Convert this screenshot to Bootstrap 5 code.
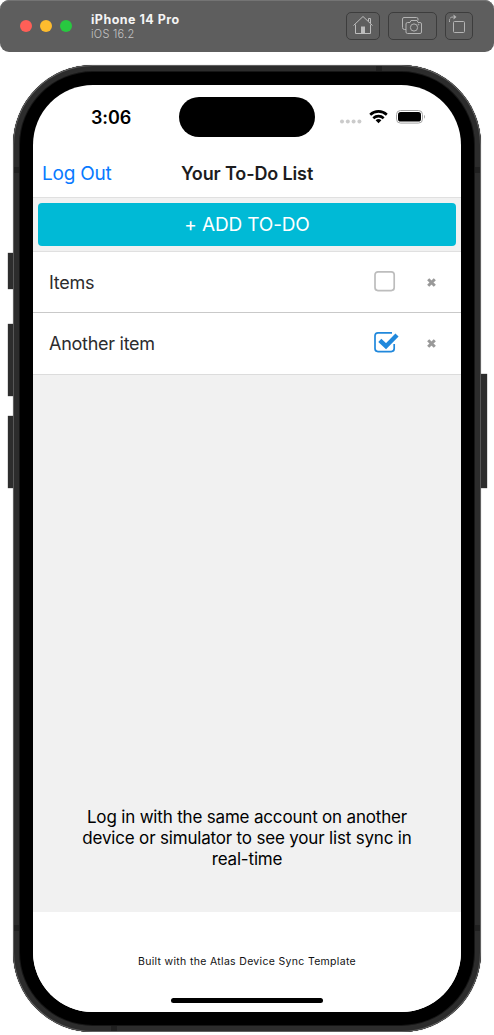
<!DOCTYPE html>
<html lang="en">
<head>
<meta charset="utf-8">
<meta name="viewport" content="width=device-width, initial-scale=1">
<title>Your To-Do List</title>
<link href="https://cdn.jsdelivr.net/npm/bootstrap@5.3.0/dist/css/bootstrap.min.css" rel="stylesheet">
<style>
body{font-family:Inter,"Liberation Sans",sans-serif;background:#fff;overflow:hidden;color:#000}
span,h1,p{white-space:nowrap}
.sim-bar{height:52px;background:#5e5e5e;border-radius:9px;box-shadow:inset 0 1px #747474;padding:0 21px 0 20px}
.dot{width:12px;height:12px;border-radius:50%}
.dot-close{background:#ff5f57}
.dot-min{background:#febc2e}
.dot-max{background:#28c840}
.sim-text{margin-left:19px}
.sim-name{font-size:12.5px;line-height:15px;font-weight:700;color:#f4f4f4;letter-spacing:.48px}
.sim-os{font-size:11px;line-height:14px;font-weight:300;color:#c4c4c4;letter-spacing:.25px}
.tool{height:28px;border:1px solid #3d3d3d;border-radius:5px}
.tool svg{display:block}
.tool-home{width:34px}
.tool-shot{width:49px}
.tool-turn{width:28px}
.phone{width:468px;height:967px;margin:13px 0 0 13px;border-radius:80px;background:#000;padding:20px;box-shadow:inset 0 0 0 1px #606060,inset 0 0 0 6px #2c2c2c,inset 0 0 0 7px #161616,0 0 1px #777}
.side{width:5.5px;background:#2d2d2d;box-shadow:0 0 1px #333}
.band{background:#202020}
.screen{height:927px;border-radius:60px;background:#fff;overflow:hidden}
.status{height:62px}
.clock{font-size:18px;line-height:20px;font-weight:600;left:58px;top:23px;letter-spacing:-.1px}
.island{width:136px;height:40px;border-radius:20px;background:#000;left:146px;top:12px}
.icons{left:306px;top:22px}
.topnav{height:51px;padding:15px 0 0 9px;border-bottom:1px solid #e0e0e0}
.logout{font-size:19px;line-height:24px;color:#087aff;letter-spacing:-.25px}
.heading{font-size:18px;line-height:24px;font-weight:600;color:#1c1c1e;letter-spacing:-.13px;top:15px}
.main-area{background:#f1f1f1}
.add-wrap{padding:5px;height:53px}
.btn-add{height:43px;background:#00bad6;color:#fff;border:0;border-radius:4px;font-size:19px;font-weight:400;line-height:43px;padding:0;letter-spacing:-.15px}
.todo{height:60px;background:#fff;padding:0 23px 0 16px;font-size:18px;color:#2c2c2e;letter-spacing:-.27px}
.todos{border-top:1px solid #e0e0e0;border-bottom:1px solid #dcdcdc}
.todo+.todo{height:62px;padding-bottom:1px;border-top:1px solid #c9c9c9}
.hint{font-size:17px;line-height:21px;margin-bottom:42px;letter-spacing:-.18px}
.foot{height:100px;background:#fff}
.built{font-size:10.5px;line-height:14px;letter-spacing:.32px;margin-top:43px;color:#111}
.home{width:152px;height:5px;border-radius:3px;background:#000;margin-top:29px}
</style>
</head>
<body>
<header class="sim-bar d-flex align-items-center">
  <div class="d-flex gap-2">
    <i class="dot dot-close"></i><i class="dot dot-min"></i><i class="dot dot-max"></i>
  </div>
  <div class="sim-text d-flex flex-column">
    <span class="sim-name">iPhone 14 Pro</span><span class="sim-os">iOS 16.2</span>
  </div>
  <div class="d-flex gap-2 ms-auto">
    <div class="tool tool-home"><svg width="32" height="26" fill="none" stroke="#bcbcbc"><path d="M6.500 12.500 16 3.500l9.500 9M8.500 11.500v9h15v-9M21.500 8V5.500h2V10"/><path d="M14 20v-6.500h4V20z" fill="#bcbcbc" stroke="none"/></svg></div>
    <div class="tool tool-shot"><svg width="47" height="26" fill="none" stroke="#b4b4b4"><path d="M17 16.500h-1.500q-2 0-2-2V6q0-1.500 1.500-1.500h12.500q1.500 0 1.500 1.500v1.500M18.500 9.500H21l1-2h6l1 2h2q1.500 0 1.500 1.500v8q0 1.500-1.500 1.500H18.500q-1.500 0-1.500-1.500v-8q0-1.500 1.500-1.500z"/><circle cx="25" cy="14.500" r="3.600"/><circle cx="29.500" cy="11.500" r=".4"/></svg></div>
    <div class="tool tool-turn"><svg width="26" height="26" fill="none" stroke="#b4b4b4"><rect x="7.500" y="8.500" width="11" height="11" rx="1"/><path d="M3.500 9V7.500q0-3.500 3.500-3.500h1.500" stroke-dasharray="3 1"/><path d="M7.500 1.500l3 2.500-3 2.500z" fill="#b4b4b4" stroke="none"/></svg></div>
  </div>
</header>

<div class="phone position-relative">
  <i class="side position-absolute" style="left:-5.5px;top:188px;height:36px"></i>
  <i class="side position-absolute" style="left:-5.5px;top:259px;height:72px"></i>
  <i class="side position-absolute" style="left:-5.5px;top:351px;height:72px"></i>
  <i class="side position-absolute" style="right:-5.5px;top:308.500px;height:114.500px"></i>
  <i class="band position-absolute" style="left:1px;top:102px;width:5px;height:6px"></i>
  <i class="band position-absolute" style="right:1px;top:102px;width:5px;height:6px"></i>
  <i class="band position-absolute" style="left:1px;top:860px;width:5px;height:6px"></i>
  <i class="band position-absolute" style="right:1px;top:860px;width:5px;height:6px"></i>
  <i class="band position-absolute" style="left:363px;top:1px;width:6px;height:5px"></i>
  <i class="band position-absolute" style="left:98px;bottom:1px;width:6px;height:5px"></i>

  <div class="screen d-flex flex-column">
    <div class="status position-relative">
      <span class="clock position-absolute">3:06</span>
      <div class="island position-absolute"></div>
      <svg class="icons position-absolute" width="90" height="22">
        <g fill="#cbcbcb"><circle cx="3" cy="14.500" r="2"/><circle cx="8.800" cy="14.500" r="2"/><circle cx="14.600" cy="14.500" r="2"/><circle cx="20.400" cy="14.500" r="2"/></g>
        <g fill="none" stroke="#000" stroke-width="2.600"><path d="M31.200 7.700a12 12 0 0 1 16.600 0M34.300 11.200a7.500 7.500 0 0 1 10.400 0"/></g>
        <path d="M36.600 13.300a4.300 4.300 0 0 1 5.800 0L39.500 16.300z"/>
        <rect x="57.500" y="3.500" width="26" height="12.600" rx="4" fill="none" stroke="#a5a5a5"/><rect x="59" y="5" width="23" height="9.600" rx="2.700"/><path d="M85 7.700q2 2 0 4z" fill="#a5a5a5"/>
      </svg>
    </div>
    <nav class="topnav position-relative d-flex align-items-start">
      <span class="logout">Log Out</span>
      <h1 class="heading position-absolute start-50 translate-middle-x m-0">Your To-Do List</h1>
    </nav>
    <main class="main-area flex-grow-1 d-flex flex-column">
      <div class="add-wrap"><button class="btn btn-add w-100 d-block">+ ADD TO-DO</button></div>
      <div class="todos">
        <div class="todo d-flex align-items-center"><span>Items</span>
          <svg class="ms-auto" width="67" height="30"><rect x="4" y="4.800" width="19.200" height="18.800" rx="3" fill="none" stroke="#bdbdbd" stroke-width="1.700"/><path d="m57.200 12.200 6.600 6.600m0-6.600-6.600 6.600" stroke="#999" stroke-width="3"/></svg></div>
        <div class="todo d-flex align-items-center"><span>Another item</span>
          <svg class="ms-auto" width="67" height="30"><path d="M21 4.800H7q-3 0-3 3v12.800q0 3 3 3h13.200q3 0 3-3v-4.500" fill="none" stroke="#2088dc" stroke-width="1.700"/><path d="m8.800 12.300 6.200 5.900L26 7" fill="none" stroke="#2088dc" stroke-width="4.400"/><path d="m57.200 12.200 6.600 6.600m0-6.600-6.600 6.600" stroke="#999" stroke-width="3"/></svg></div>
      </div>
      <p class="hint text-center mt-auto">Log in with the same account on another<br>device or simulator to see your list sync in<br>real-time</p>
    </main>
    <footer class="foot d-flex flex-column align-items-center">
      <span class="built">Built with the Atlas Device Sync Template</span>
      <div class="home"></div>
    </footer>
  </div>
</div>
<script src="https://cdn.jsdelivr.net/npm/bootstrap@5.3.0/dist/js/bootstrap.bundle.min.js"></script>
</body>
</html>
